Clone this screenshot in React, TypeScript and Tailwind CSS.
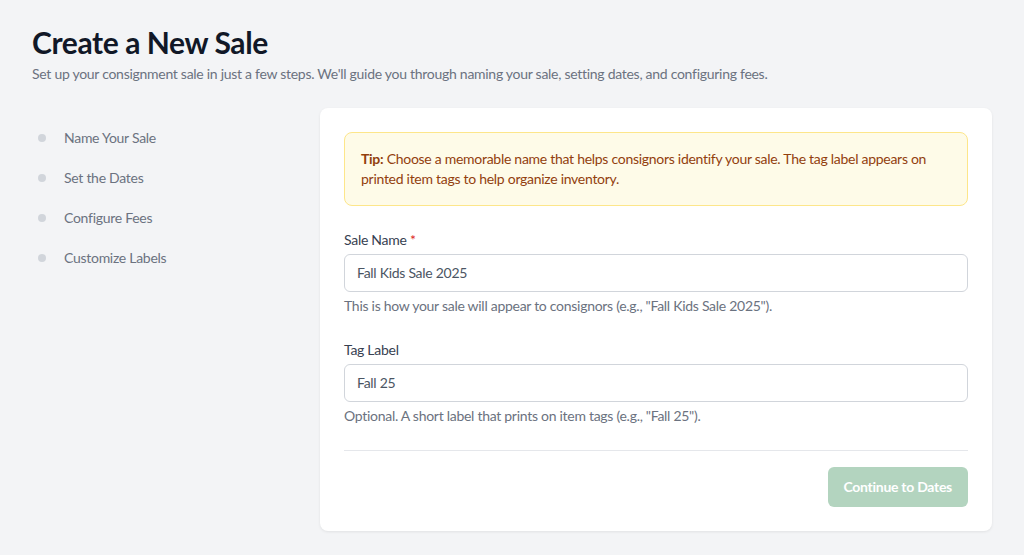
import React from "react";

const steps = ["Name Your Sale", "Set the Dates", "Configure Fees", "Customize Labels"];

function App() {
  const [sale, setSale] = React.useState({ name: "Fall Kids Sale 2025", tag: "Fall 25" });

  const handleChange = (e: any) => {
    const { name, value } = e.target;
    setSale((prev) => ({ ...prev, [name]: value }));
  };

  return (
    <main
      className="min-h-screen w-full bg-[#f3f4f6] px-8 pt-6 pb-6 tracking-[-0.28px]"
      style={{ fontFamily: "Lato, 'Noto Sans', sans-serif" }}
    >
      {/* Header */}
      <h1 className="text-[30px] leading-9 font-bold tracking-[-0.4px] text-[#111827]">
        Create a New Sale
      </h1>
      <p className="mt-1 text-sm leading-5 text-[#6b7280]">
        Set up your consignment sale in just a few steps. We'll guide you through naming your sale,
        setting dates, and configuring fees.
      </p>

      <div className="mt-6 flex gap-8">
        {/* Steps */}
        <ul className="w-64 shrink-0 pt-[10px]">
          {steps.map((step) => (
            <li key={step} className="flex items-center gap-3 h-10">
              <span className="flex w-5 justify-center">
                <span className="h-2 w-2 rounded-full bg-[#d1d5db]"></span>
              </span>
              <span className="text-sm text-[#6b7280]">{step}</span>
            </li>
          ))}
        </ul>

        {/* Card */}
        <div className="flex-1 rounded-lg bg-white p-6 shadow-[0_1px_3px_rgba(0,0,0,0.08)]">
          <p className="rounded-lg border border-[#fde68a] bg-[#fefbe8] p-4 text-sm leading-5 text-[#92400e]">
            <strong className="font-bold">Tip:</strong> Choose a memorable name that helps
            consignors identify your sale. The tag label appears on printed item tags to help
            organize inventory.
          </p>

          <form className="mt-6">
            {/* Sale Name */}
            <label className="block text-sm leading-5 text-[#374151]" htmlFor="name">
              Sale Name <span className="text-[#dc2626]">*</span>
            </label>
            <input
              className="mt-1 block w-full rounded-md border border-[#d1d5db] px-3 py-2 text-sm leading-5 text-[#4b5563] focus:outline-none"
              id="name"
              name="name"
              type="text"
              value={sale.name}
              onChange={handleChange}
            />
            <p className="mt-1 text-sm leading-5 text-[#6b7280]">
              This is how your sale will appear to consignors (e.g., "Fall Kids Sale 2025").
            </p>

            {/* Tag Label */}
            <label className="mt-6 block text-sm leading-5 text-[#374151]" htmlFor="tag">
              Tag Label
            </label>
            <input
              className="mt-1 block w-full rounded-md border border-[#d1d5db] px-3 py-2 text-sm leading-5 text-[#4b5563] focus:outline-none"
              id="tag"
              name="tag"
              type="text"
              value={sale.tag}
              onChange={handleChange}
            />
            <p className="mt-1 text-sm leading-5 text-[#6b7280]">
              Optional. A short label that prints on item tags (e.g., "Fall 25").
            </p>

            {/* Actions */}
            <div className="mt-6 flex justify-end border-t border-[#e5e7eb] pt-4">
              <button
                className="rounded-md bg-[#b3d4bf] px-4 py-2.5 text-sm leading-5 font-bold text-white"
                type="button"
                disabled
              >
                Continue to Dates
              </button>
            </div>
          </form>
        </div>
      </div>
    </main>
  );
}

export default App;
